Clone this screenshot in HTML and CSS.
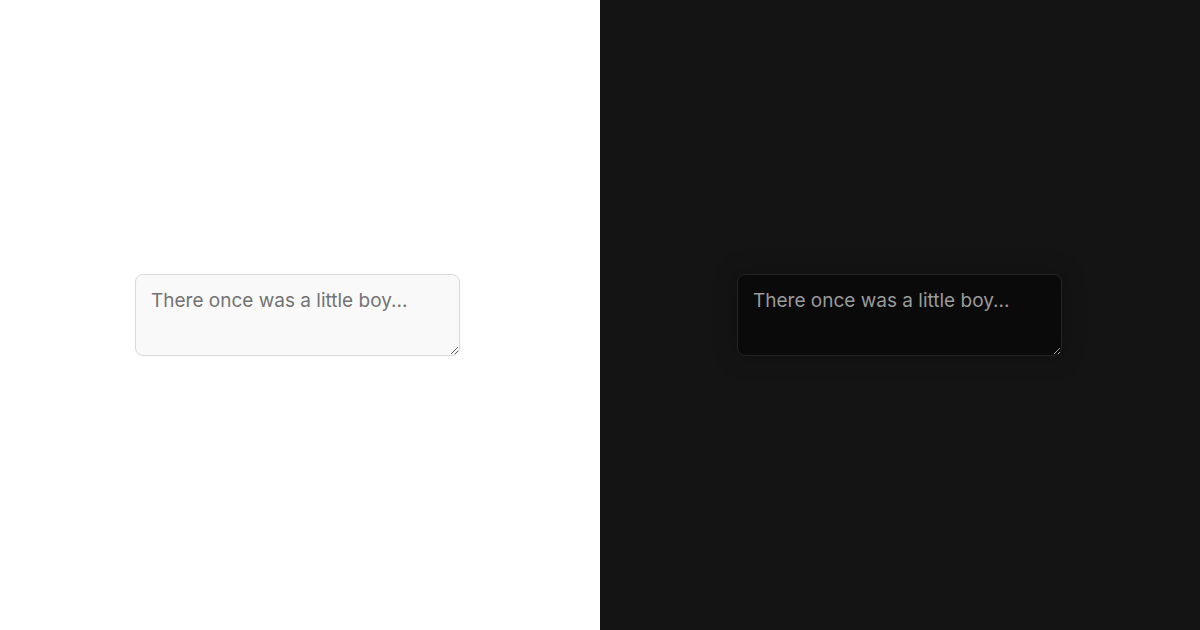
FILE: index.html
```html
<!DOCTYPE html>
<html>
<head>
<meta charset="utf-8">
<link rel="stylesheet" href="styles.css">
</head>
<body>
<div class="split">
  <div class="pane light">
    <textarea class="field" placeholder="There once was a little boy..."></textarea>
  </div>
  <div class="pane dark">
    <textarea class="field" placeholder="There once was a little boy..."></textarea>
  </div>
</div>
</body>
</html>
```
FILE: styles.css
```css
html, body { margin: 0; padding: 0; }
.split { display: flex; width: 1200px; height: 630px; }
.pane { flex: 1; display: flex; align-items: center; justify-content: center; }
.light { background: #ffffff; }
.dark { background: #141414; }
.field {
  box-sizing: border-box;
  width: 325px;
  height: 82px;
  margin-bottom: 1px;
  padding: 13px 15px 11px;
  font-family: Inter, "Noto Sans", sans-serif;
  font-size: 19px;
  line-height: 26px;
  border-radius: 8px;
  outline: none;
}
.light .field { margin-right: 5px; background: #f9f9f9; border: 1px solid #d9d9d9; color: #333; }
.light .field::placeholder { color: #737373; }
.dark .field { margin-right: 1px; background: #0a0a0a; border: 1px solid #232323; color: #ddd; box-shadow: 0 0 24px rgba(0,0,0,0.25); }
.dark .field::placeholder { color: #9a9a9a; }
```
